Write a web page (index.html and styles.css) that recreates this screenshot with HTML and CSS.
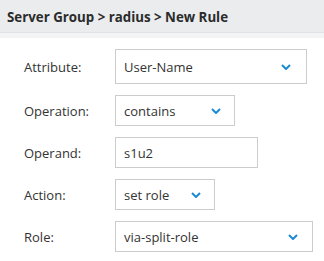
FILE: index.html
```html
<!DOCTYPE html>
<html lang="en">

<head>
    <meta charset="UTF-8">
    <meta name="viewport" content="width=device-width, initial-scale=1.0">
    <title>New Rule</title>
    <link rel="stylesheet" href="styles.css">
</head>

<body>
    <div class="panel">
        <div class="panel-head">Server Group &gt; radius &gt; New Rule</div>
        <form class="rule-form" action="#">
            <div class="row">
                <label class="row-label">Attribute:</label>
                <div class="field select w-attr tall">
                    <span>User-Name</span>
                    <svg class="chev" width="10" height="6" viewBox="0 0 10 6"><polyline points="1,1 5,5 9,1" /></svg>
                </div>
            </div>
            <div class="row">
                <label class="row-label">Operation:</label>
                <div class="field select w-op">
                    <span>contains</span>
                    <svg class="chev" width="10" height="6" viewBox="0 0 10 6"><polyline points="1,1 5,5 9,1" /></svg>
                </div>
            </div>
            <div class="row">
                <label class="row-label">Operand:</label>
                <div class="field w-operand">
                    <span>s1u2</span>
                </div>
            </div>
            <div class="row">
                <label class="row-label">Action:</label>
                <div class="field select w-action">
                    <span>set role</span>
                    <svg class="chev" width="10" height="6" viewBox="0 0 10 6"><polyline points="1,1 5,5 9,1" /></svg>
                </div>
            </div>
            <div class="row">
                <label class="row-label">Role:</label>
                <div class="field select w-role">
                    <span>via-split-role</span>
                    <svg class="chev" width="10" height="6" viewBox="0 0 10 6"><polyline points="1,1 5,5 9,1" /></svg>
                </div>
            </div>
        </form>
    </div>
</body>

</html>
```

FILE: styles.css
```css
* {
    margin: 0;
    padding: 0;
    box-sizing: border-box;
}

body {
    font-family: "Open Sans", "Liberation Sans", sans-serif;
    color: #333;
    background: #fff;
}

/* grey title bar with a lighter strip under the rule */
.panel-head {
    height: 33px;
    padding: 8px 7px 0;
    font-size: 13.3px;
    font-weight: bold;
    color: #2b2b2b;
    background: #eaecee;
    border-bottom: 1px solid #e0e2e4;
    box-shadow: 0 5px 0 #f3f4f6;
}

.rule-form {
    padding: 16px 0 0 24px;
}

.row {
    display: flex;
    align-items: center;
    margin-bottom: 11px;
}

.row-label {
    width: 91px;
    font-size: 13px;
    color: #333;
}

.field {
    display: flex;
    align-items: center;
    justify-content: space-between;
    height: 31px;
    padding: 0 16px 0 8px;
    border: 1px solid #ccc;
    font-size: 13px;
    color: #333;
    background: #fff;
}

.tall {
    height: 35px;
}

.chev polyline {
    fill: none;
    stroke: #1b8ad3;
    stroke-width: 2;
}

.w-attr {
    width: 192px;
    padding-right: 15px;
}

.w-op {
    width: 120px;
    padding-right: 13px;
}

.w-operand {
    width: 143px;
}

.w-action {
    width: 100px;
    padding-right: 13px;
}

.w-role {
    width: 198px;
    padding-right: 14px;
}
```
